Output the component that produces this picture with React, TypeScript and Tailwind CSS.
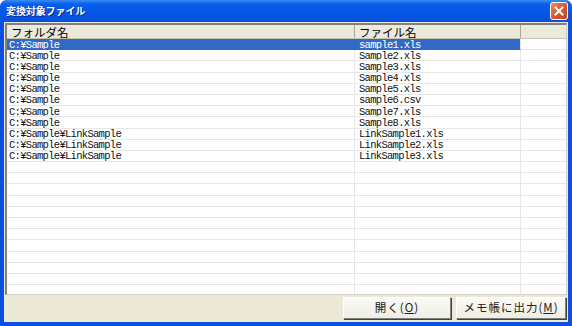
import React from "react";

const rows: [string, string][] = [
  ["C:¥Sample", "sample1.xls"],
  ["C:¥Sample", "Sample2.xls"],
  ["C:¥Sample", "Sample3.xls"],
  ["C:¥Sample", "Sample4.xls"],
  ["C:¥Sample", "Sample5.xls"],
  ["C:¥Sample", "sample6.csv"],
  ["C:¥Sample", "Sample7.xls"],
  ["C:¥Sample", "Sample8.xls"],
  ["C:¥Sample¥LinkSample", "LinkSample1.xls"],
  ["C:¥Sample¥LinkSample", "LinkSample2.xls"],
  ["C:¥Sample¥LinkSample", "LinkSample3.xls"],
];

const empty = Array.from({ length: 14 }, () => ["", ""] as [string, string]);

const mono = "font-['Liberation_Mono','Noto_Sans_CJK_JP',monospace] text-[10.5px] tracking-[-0.7px]";
const jp = "font-['Noto_Sans_CJK_JP','Noto_Sans',sans-serif]";

export default function App() {
  const all = [...rows, ...empty];
  return (
    <div className="w-[572px] h-[326px] flex flex-col rounded-t-[7px] overflow-hidden bg-[#0A4FE0]">
      <div className="h-[22px] shrink-0 flex items-center justify-between pl-[6px] pr-[4px] bg-[linear-gradient(to_bottom,#3A8CF8_0%,#0A5EEC_18%,#0556E6_60%,#0A50DA_100%)]">
        <span className={`${jp} text-white font-bold text-[10px] leading-none tracking-[-0.1px] [text-shadow:1px_1px_0_#0A2A8A]`}>
          変換対象ファイル
        </span>
        <div className="w-[18px] h-[18px] rounded-[3px] border border-white bg-[linear-gradient(135deg,#F08A66_0%,#E15A34_45%,#C8401E_100%)] flex items-center justify-center">
          <svg width="10" height="10" viewBox="0 0 10 10">
            <path d="M1.5 1.5 L8.5 8.5 M8.5 1.5 L1.5 8.5" stroke="white" strokeWidth="2" strokeLinecap="square" />
          </svg>
        </div>
      </div>
      <div className="flex-1 mx-[4px] mb-[4px] bg-[#ECE9D8] flex flex-col pt-[1px] px-[1px] min-h-0">
        <div className="h-[272px] shrink-0 bg-white border-t-2 border-l-2 border-t-[#808080] border-l-[#808080] border-r border-b border-r-[#D4D0C8] border-b-[#D4D0C8] flex flex-col overflow-hidden">
          <div className={`h-[14px] shrink-0 flex bg-[#EBEADB] border-b border-b-[#C5C2B2] ${jp} text-[11.5px] text-black leading-[14px]`}>
            <div className="w-[348px] shrink-0 pl-[4px] border-r border-r-[#ACA899]">フォルダ名</div>
            <div className="w-[166px] shrink-0 pl-[4px] border-r border-r-[#ACA899]">ファイル名</div>
            <div className="flex-1" />
          </div>
          <div className="flex-1 flex flex-col overflow-hidden">
            {all.map(([a, b], i) => {
              const sel = i === 0;
              return (
                <div key={i} className={`h-[11.2px] shrink-0 flex ${mono} leading-[10.2px]`}>
                  <div className={`w-[348px] shrink-0 pl-[2px] pt-[0.5px] border-r border-b overflow-hidden ${sel ? "bg-[#316AC5] text-white border-[#316AC5]" : "text-[#111] border-[#E6E6E6]"}`}>
                    {a}
                  </div>
                  <div className={`w-[166px] shrink-0 pl-[4px] pt-[0.5px] border-r border-b overflow-hidden ${sel ? "bg-[#316AC5] text-white border-r-[#E6E6E6] border-b-[#316AC5]" : "text-[#111] border-[#E6E6E6]"}`}>
                    {b}
                  </div>
                  <div className="flex-1 border-b border-[#E6E6E6]" />
                </div>
              );
            })}
          </div>
        </div>
        <div className="flex-1 flex items-start justify-end gap-[5px] pt-[2px] pr-[1px]">
          <button className={`w-[108px] h-[22px] ${jp} text-[11.5px] text-[#222] bg-[linear-gradient(to_bottom,#FAFAF6,#EEEDE5)] border border-t-white border-l-white border-r-[#808080] border-b-[#808080] shadow-[1px_1px_0_#404040] flex items-center justify-center tracking-[1px]`}>
            開く(<span className="underline">O</span>)
          </button>
          <button className={`w-[110px] h-[22px] ${jp} text-[11.5px] text-[#222] bg-[linear-gradient(to_bottom,#FAFAF6,#EEEDE5)] border border-t-white border-l-white border-r-[#808080] border-b-[#808080] shadow-[1px_1px_0_#404040] flex items-center justify-center tracking-[1px]`}>
            メモ帳に出力(<span className="underline">M</span>)
          </button>
        </div>
      </div>
    </div>
  );
}
